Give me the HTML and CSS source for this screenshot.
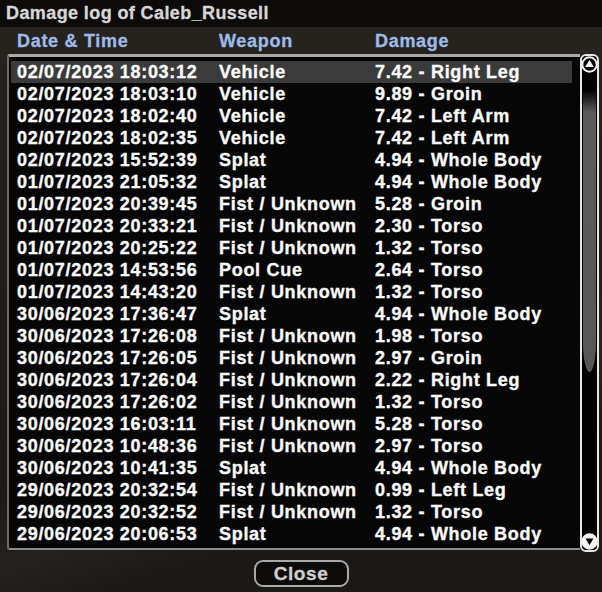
FILE: index.html
```html
<!DOCTYPE html>
<html lang="en">
<head>
  <meta charset="UTF-8">
  <title>Damage log</title>
  <link rel="stylesheet" href="styles.css">
</head>
<body>
  <div class="dialog">
    <div class="title">Damage log of Caleb_Russell</div>

    <div class="head row-grid">
      <span>Date &amp; Time</span>
      <span>Weapon</span>
      <span>Damage</span>
    </div>

    <div class="list-wrap">
      <div class="list">
        <div class="row row-grid selected"><span>02/07/2023 18:03:12</span><span>Vehicle</span><span>7.42 - Right Leg</span></div>
        <div class="row row-grid"><span>02/07/2023 18:03:10</span><span>Vehicle</span><span>9.89 - Groin</span></div>
        <div class="row row-grid"><span>02/07/2023 18:02:40</span><span>Vehicle</span><span>7.42 - Left Arm</span></div>
        <div class="row row-grid"><span>02/07/2023 18:02:35</span><span>Vehicle</span><span>7.42 - Left Arm</span></div>
        <div class="row row-grid"><span>02/07/2023 15:52:39</span><span>Splat</span><span>4.94 - Whole Body</span></div>
        <div class="row row-grid"><span>01/07/2023 21:05:32</span><span>Splat</span><span>4.94 - Whole Body</span></div>
        <div class="row row-grid"><span>01/07/2023 20:39:45</span><span>Fist / Unknown</span><span>5.28 - Groin</span></div>
        <div class="row row-grid"><span>01/07/2023 20:33:21</span><span>Fist / Unknown</span><span>2.30 - Torso</span></div>
        <div class="row row-grid"><span>01/07/2023 20:25:22</span><span>Fist / Unknown</span><span>1.32 - Torso</span></div>
        <div class="row row-grid"><span>01/07/2023 14:53:56</span><span>Pool Cue</span><span>2.64 - Torso</span></div>
        <div class="row row-grid"><span>01/07/2023 14:43:20</span><span>Fist / Unknown</span><span>1.32 - Torso</span></div>
        <div class="row row-grid"><span>30/06/2023 17:36:47</span><span>Splat</span><span>4.94 - Whole Body</span></div>
        <div class="row row-grid"><span>30/06/2023 17:26:08</span><span>Fist / Unknown</span><span>1.98 - Torso</span></div>
        <div class="row row-grid"><span>30/06/2023 17:26:05</span><span>Fist / Unknown</span><span>2.97 - Groin</span></div>
        <div class="row row-grid"><span>30/06/2023 17:26:04</span><span>Fist / Unknown</span><span>2.22 - Right Leg</span></div>
        <div class="row row-grid"><span>30/06/2023 17:26:02</span><span>Fist / Unknown</span><span>1.32 - Torso</span></div>
        <div class="row row-grid"><span>30/06/2023 16:03:11</span><span>Fist / Unknown</span><span>5.28 - Torso</span></div>
        <div class="row row-grid"><span>30/06/2023 10:48:36</span><span>Fist / Unknown</span><span>2.97 - Torso</span></div>
        <div class="row row-grid"><span>30/06/2023 10:41:35</span><span>Splat</span><span>4.94 - Whole Body</span></div>
        <div class="row row-grid"><span>29/06/2023 20:32:54</span><span>Fist / Unknown</span><span>0.99 - Left Leg</span></div>
        <div class="row row-grid"><span>29/06/2023 20:32:52</span><span>Fist / Unknown</span><span>1.32 - Torso</span></div>
        <div class="row row-grid"><span>29/06/2023 20:06:53</span><span>Splat</span><span>4.94 - Whole Body</span></div>
      </div>

      <!-- scrollbar with round arrow buttons -->
      <div class="scrollbar">
        <svg class="arrow" width="17" height="17" viewBox="0 0 17 17">
          <circle cx="8.5" cy="8.5" r="7.2" fill="#000" stroke="#f2f2f2" stroke-width="2"/>
          <path d="M8.5 3.8 L12.8 11 L4.2 11 Z" fill="#f2f2f2"/>
        </svg>
        <div class="track"><div class="thumb"></div></div>
        <svg class="arrow" width="17" height="17" viewBox="0 0 17 17">
          <circle cx="8.5" cy="8.5" r="7.2" fill="#f2f2f2" stroke="#f2f2f2" stroke-width="2"/>
          <path d="M4.6 5.6 L12.4 5.6 L8.5 12.2 Z" fill="#000"/>
        </svg>
      </div>
    </div>

    <div class="footer">
      <button class="close">Close</button>
    </div>
  </div>
</body>
</html>
```

FILE: styles.css
```css
body {
  margin: 0;
  width: 602px;
  height: 592px;
  overflow: hidden;
  background: #1d1a17;
  font-family: "Liberation Sans", Arial, sans-serif;
  font-weight: bold;
  font-size: 18px;
}
.dialog {
  display: flex;
  flex-direction: column;
  width: 602px;
  height: 592px;
  background:
    linear-gradient(160deg, transparent 60%, rgba(255,255,255,0.04) 70%, transparent 78%),
    linear-gradient(to bottom, #26221e 30px, #201d1a 300px, #1b1916 100%);
}
.title {
  height: 27px;
  line-height: 26px;
  padding-left: 6px;
  background: #0d0b09;
  color: #d6d6d6;
  letter-spacing: 0.4px;
  -webkit-text-stroke: 0.3px #d6d6d6;
}
.row-grid {
  display: grid;
  grid-template-columns: 202px 156px 1fr;
  letter-spacing: 0.7px;
}
.head {
  height: 27px;
  line-height: 28px;
  padding-left: 17px;
  color: #9dbbe8;
  -webkit-text-stroke: 0.3px #9dbbe8;
}
.list-wrap {
  display: flex;
  height: 498px;
  margin-left: 7px;
  margin-right: 3px;
}
.list {
  flex: 1;
  height: 496px;
  box-sizing: border-box;
  padding: 4px 8px 0 2px;
  background: #060606;
  border-top: 3px solid #a9a9a9;
  border-left: 2px solid #6b6b6b;
  border-bottom: 2px solid #8c8c8c;
  border-top-left-radius: 3px;
  border-bottom-left-radius: 3px;
}
.row {
  height: 22px;
  line-height: 22px;
  padding-left: 6px;
  color: #fafafa;
  -webkit-text-stroke: 0.35px #fafafa;
}
.row.selected {
  background: #3b3b3b;
}
.scrollbar {
  width: 15px;
  display: flex;
  flex-direction: column;
  align-items: center;
  padding: 0;
  border: 2px solid #e6e6e6;
  border-radius: 6px;
  background: #000;
}
.arrow {
  flex: none;
  margin: 0 -1px;
}
.track {
  flex: 1;
  width: 15px;
  padding-top: 17px;
}
.thumb {
  width: 13px;
  margin: 0 auto;
  height: 282px;
  background: linear-gradient(to bottom, #000 0, #5a5a5a 22px, #575757 100%);
  border-radius: 2px 2px 50% 50% / 2px 2px 30px 30px;
}
.footer {
  flex: 1;
  display: flex;
  justify-content: center;
  align-items: center;
  padding-top: 3px;
}
.close {
  width: 95px;
  height: 27px;
  padding: 0;
  background: rgba(0,0,0,0.55);
  border: 2px solid #a8a8a8;
  border-radius: 9px;
  color: #cfcfcf;
  font-family: "Liberation Sans", Arial, sans-serif;
  font-weight: bold;
  font-size: 19px;
  letter-spacing: 0.6px;
  line-height: 23px;
  -webkit-text-stroke: 0.3px #cfcfcf;
}
```
